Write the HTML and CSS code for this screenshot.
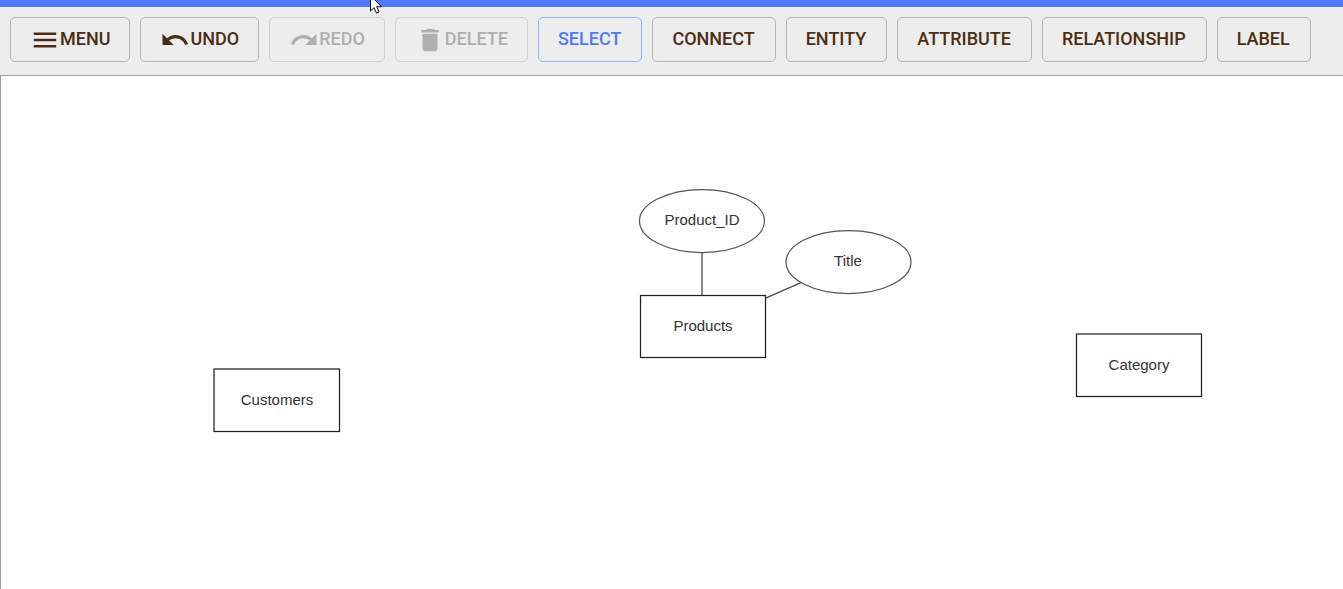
FILE: index.html
```
<!DOCTYPE html>
<html lang="en">
<head>
  <meta charset="UTF-8" />
  <meta name="viewport" content="width=device-width, initial-scale=1.0"/>
  <title>ER Diagram Editor</title>
  <link rel="stylesheet" href="styles.css">
</head>
<body>

  <!-- Top bar -->
  <header class="top-bar"></header>

  <!-- Toolbar -->
  <div class="toolbar" role="toolbar" aria-label="Diagram tools">
    <button type="button" class="tool">
      <svg class="icon" viewBox="0 0 24 24"><path d="M3 18h18v-2H3v2zm0-5h18v-2H3v2zm0-7v2h18V6H3z"/></svg>
      Menu
    </button>
    <button type="button" class="tool">
      <svg class="icon" viewBox="0 0 24 24"><path d="M12.5 8c-2.65 0-5.05.99-6.9 2.6L2 7v9h9l-3.62-3.62c1.39-1.16 3.16-1.88 5.12-1.88 3.54 0 6.55 2.31 7.6 5.5l2.37-.78C21.08 11.03 17.15 8 12.5 8z"/></svg>
      Undo
    </button>
    <button type="button" class="tool" disabled>
      <svg class="icon" viewBox="0 0 24 24"><path d="M18.4 10.6C16.55 8.99 14.15 8 11.5 8c-4.65 0-8.58 3.03-9.96 7.22L3.9 16c1.05-3.19 4.05-5.5 7.6-5.5 1.95 0 3.73.72 5.12 1.88L13 16h9V7l-3.6 3.6z"/></svg>
      Redo
    </button>
    <button type="button" class="tool" disabled>
      <svg class="icon" viewBox="0 0 24 24"><path d="M6 19c0 1.1.9 2 2 2h8c1.1 0 2-.9 2-2V7H6v12zM19 4h-3.5l-1-1h-5l-1 1H5v2h14V4z"/></svg>
      Delete
    </button>
    <button type="button" class="tool mode active" aria-pressed="true">Select</button>
    <button type="button" class="tool mode">Connect</button>
    <button type="button" class="tool mode">Entity</button>
    <button type="button" class="tool mode">Attribute</button>
    <button type="button" class="tool mode">Relationship</button>
    <button type="button" class="tool mode">Label</button>
  </div>

  <!-- Canvas -->
  <main class="canvas">
    <svg class="diagram" role="img" aria-label="Entity relationship diagram">
      <line class="link" x1="701" y1="145" x2="701" y2="250"/>
      <line class="link" x1="701" y1="250" x2="847" y2="186"/>

      <ellipse class="attribute" cx="701" cy="145" rx="62.5" ry="31.5"/>
      <text class="name" x="701" y="149">Product_ID</text>

      <ellipse class="attribute" cx="847.5" cy="186" rx="62.5" ry="31.5"/>
      <text class="name" x="847" y="190">Title</text>

      <rect class="entity" x="639.5" y="219.5" width="125" height="62"/>
      <text class="name" x="702" y="255">Products</text>

      <rect class="entity" x="213" y="293" width="125.5" height="62.5"/>
      <text class="name" x="276" y="329">Customers</text>

      <rect class="entity" x="1075.5" y="258" width="125" height="62.5"/>
      <text class="name" x="1138" y="294">Category</text>
    </svg>
  </main>

  <!-- Mouse pointer -->
  <svg class="pointer" viewBox="0 0 12 19" aria-hidden="true"><path d="M.5.5v15.500l3.500-3.300 2.500 5.500 2.600-1.200-2.400-5.300h4.800z"/></svg>

</body>
</html>
```

FILE: styles.css
```
* {
  box-sizing: border-box;
  margin: 0;
  padding: 0;
}

body {
  display: flex;
  flex-direction: column;
  min-height: 100vh;
  font-family: Roboto, "Liberation Sans", sans-serif;
  background-color: #fff;
}

.top-bar {
  height: 7px;
  background-color: #4f78ff;
}

.toolbar {
  display: flex;
  gap: 10px;
  padding: 10px 10px 13px;
  background-color: #ededed;
}

.tool {
  display: flex;
  align-items: center;
  height: 45px;
  padding: 0 19px 2px;
  border: 1px solid #b5b5b5;
  border-radius: 5px;
  background: transparent;
  color: #4b2e12;
  font-family: inherit;
  font-size: 18px;
  font-weight: 500;
  line-height: 30px;
  text-transform: uppercase;
  white-space: nowrap;
  cursor: pointer;
}

.tool:hover {
  background-color: rgba(0, 0, 0, 0.04);
}

.tool.mode {
  padding-right: 20px;
}

.tool.active {
  color: #4f78ff;
  border-color: #9cb2f8;
}

.tool:disabled {
  color: #afafaf;
  border-color: #d0d0d0;
  cursor: default;
}

.icon {
  width: 30px;
  height: 30px;
  margin-top: 2px;
  fill: currentColor;
}

.canvas {
  display: flex;
  flex: 1;
  border-top: 1px solid #a0a0a0;
  border-left: 1px solid #a0a0a0;
}

.diagram {
  flex: 1;
}

.entity {
  fill: #fff;
  stroke: #222;
  stroke-width: 1.25;
}

.attribute {
  fill: #fff;
  stroke: #555;
  stroke-width: 1.25;
}

.link {
  stroke: #444;
  stroke-width: 1.25;
}

.name {
  fill: #333;
  font-family: "Liberation Sans", Arial, sans-serif;
  font-size: 15px;
  text-anchor: middle;
}

.pointer {
  position: absolute;
  top: -5px;
  left: 370px;
  width: 12px;
  height: 19px;
  fill: #fff;
  stroke: #111;
}
```
